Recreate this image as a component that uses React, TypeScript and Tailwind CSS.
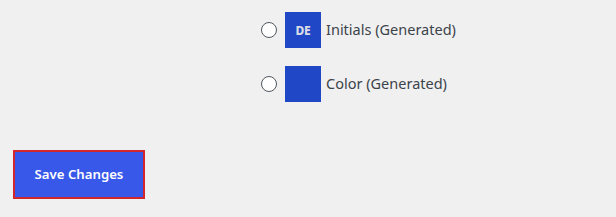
import React from 'react'

interface AvatarOption {
  id: string
  label: string
  initials?: string
}

const options: AvatarOption[] = [
  { id: 'initials', label: 'Initials (Generated)', initials: 'DE' },
  { id: 'color', label: 'Color (Generated)' },
]

export default function App(): React.JSX.Element {
  const [selected, setSelected] = React.useState<string | null>(null)

  return (
    <div
      className="flex h-[217px] w-full flex-col bg-[#f0f0f1] text-[#3c434a]"
      style={{ fontFamily: '"Noto Sans", "Open Sans", sans-serif' }}
    >
      {/* Avatar options */}
      <div className="ml-[261px] mt-[12px] flex flex-col gap-[18px]">
        {options.map((opt) => (
          <label key={opt.id} className="flex h-[36px] cursor-pointer items-center">
            <input
              type="radio"
              name="default_avatar"
              checked={selected === opt.id}
              onChange={() => setSelected(opt.id)}
              className="h-[16px] w-[16px] cursor-pointer appearance-none rounded-full border border-[#50575e] bg-white checked:border-[5px] checked:border-[#3858e9]"
            />
            <span className="ml-[8px] flex h-[36px] w-[36px] items-center justify-center bg-[#2048c6] pt-px text-[12px] font-extrabold tracking-tight text-[#d9dbe6]">
              {opt.initials}
            </span>
            <span className="ml-[5px] text-[14.5px]">{opt.label}</span>
          </label>
        ))}
      </div>

      {/* Submit */}
      <div className="ml-[13px] mt-[48px]">
        <button
          type="button"
          className="h-[49px] w-[132px] border-2 border-[#d2262e] bg-[#3858e9] text-[13.2px] font-semibold text-white"
        >
          Save Changes
        </button>
      </div>
    </div>
  )
}
